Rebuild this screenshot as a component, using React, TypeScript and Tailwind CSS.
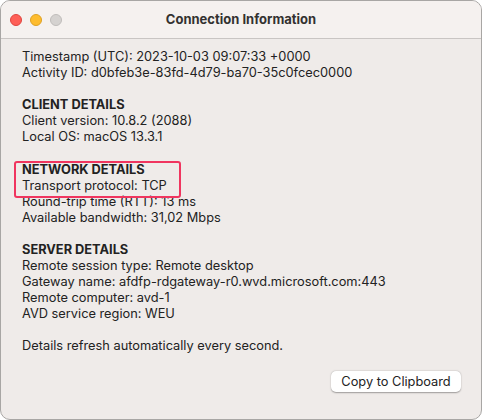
import React from "react";

const Line = ({ children, bold = false }: { children?: React.ReactNode; bold?: boolean }) => (
  <div className={`h-[16px] leading-[16px] whitespace-nowrap ${bold ? "font-bold" : ""}`}>{children}</div>
);

export default function App() {
  return (
    <div className="w-[482px] h-[420px] bg-white proportional-nums" style={{ fontFamily: 'Inter, "Liberation Sans", Arial, sans-serif' }}>
      <div className="w-[482px] h-[420px] rounded-[10px] border border-[#a8a6a4] overflow-hidden flex flex-col bg-[#efebe9] relative">
        <div className="h-[38px] shrink-0 bg-[#f5f1ef] border-b border-[#c9c5c3] flex items-center relative">
          <div className="flex items-center gap-[8px] pl-[9px]">
            <div className="w-[12px] h-[12px] rounded-full bg-[#fe5f57] border border-[#e0443e]" />
            <div className="w-[12px] h-[12px] rounded-full bg-[#febc2e] border border-[#dea123]" />
            <div className="w-[12px] h-[12px] rounded-full bg-[#d5d2d0] border border-[#c0bdbb]" />
          </div>
          <div className="absolute inset-0 flex items-center justify-center text-[13px] font-bold text-[#333130]">
            Connection Information
          </div>
        </div>
        <div className="flex-1 pl-[21px] pt-[10px] text-[12.8px] text-[#222]">
          <Line>Timestamp (UTC): 2023-10-03 09:07:33 +0000</Line>
          <Line>Activity ID: d0bfeb3e-83fd-4d79-ba70-35c0fcec0000</Line>
          <Line />
          <Line bold>CLIENT DETAILS</Line>
          <Line>Client version: 10.8.2 (2088)</Line>
          <Line>Local OS: macOS 13.3.1</Line>
          <div className="h-[17px]" />
          <Line bold>NETWORK DETAILS</Line>
          <Line>Transport protocol: TCP</Line>
          <Line>Round-trip time (RTT): 13 ms</Line>
          <Line>Available bandwidth: 31,02 Mbps</Line>
          <Line />
          <Line bold>SERVER DETAILS</Line>
          <Line>Remote session type: Remote desktop</Line>
          <Line>Gateway name: afdfp-rdgateway-r0.wvd.microsoft.com:443</Line>
          <Line>Remote computer: avd-1</Line>
          <Line>AVD service region: WEU</Line>
          <Line />
          <Line>Details refresh automatically every second.</Line>
          <div className="flex justify-end pr-[20px] pt-[17px]">
            <button className="h-[21px] w-[130px] rounded-[5px] bg-white text-[12.8px] text-[#222] shadow-[0_0.5px_1.5px_rgba(0,0,0,0.35)] flex items-center justify-center">
              Copy to Clipboard
            </button>
          </div>
        </div>
        <div className="absolute left-[13px] top-[160px] w-[167px] h-[37px] border-2 border-[#f0355f] rounded-[3px]" />
      </div>
    </div>
  );
}
